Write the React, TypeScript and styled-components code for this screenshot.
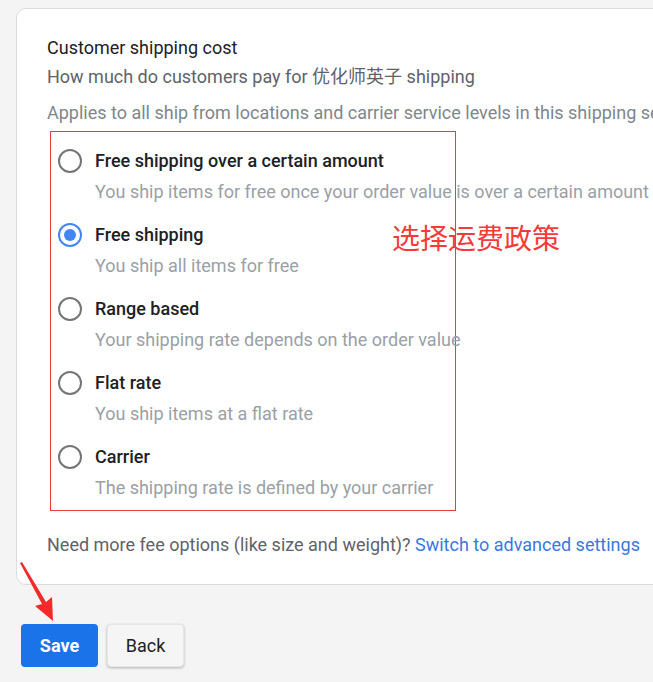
import React from "react";
import styled, { createGlobalStyle } from "styled-components";

const GlobalStyle = createGlobalStyle`
  html, body {
    margin: 0;
    padding: 0;
    background: #f4f4f4;
    overflow: hidden;
  }
  body {
    font-family: Roboto, "Noto Sans CJK SC", "Liberation Sans", sans-serif;
    -webkit-font-smoothing: antialiased;
  }
`;

const Page = styled.div`
  position: relative;
  width: 653px;
  height: 682px;
  overflow: hidden;
  background: #f4f4f4;
  padding-top: 8px;
  box-sizing: border-box;
`;

const Card = styled.section`
  margin-left: 16px;
  width: 720px;
  box-sizing: border-box;
  background: #ffffff;
  border: 1px solid #dadce0;
  border-radius: 10px;
  padding: 27px 0 27px 30px;
`;

const Title = styled.div`
  font-size: 18px;
  line-height: 24px;
  color: #202124;
  white-space: nowrap;
`;

const Subtitle = styled.div`
  font-size: 18px;
  line-height: 24px;
  color: #5f6368;
  margin-top: 5px;
  white-space: nowrap;
`;

const Hint = styled.div`
  font-size: 18px;
  line-height: 24px;
  color: #80868b;
  margin-top: 12px;
  white-space: nowrap;
`;

const OptionsBox = styled.div`
  position: relative;
  margin-top: 6px;
  margin-left: 3px;
  width: 406px;
  box-sizing: border-box;
  border: 1px solid #ec3b3b;
  padding: 17px 8px 10px 7px;
  display: flex;
  flex-direction: column;
  gap: 19px;
`;

const Option = styled.label`
  display: grid;
  grid-template-columns: 24px auto;
  column-gap: 13px;
  align-items: start;
  cursor: pointer;
`;

const Radio = styled.span<{ $checked?: boolean }>`
  width: 24px;
  height: 24px;
  box-sizing: border-box;
  border-radius: 50%;
  border: 2px solid ${(p) => (p.$checked ? "#4285f4" : "#757575")};
  display: flex;
  align-items: center;
  justify-content: center;
  &::after {
    content: "";
    width: 12px;
    height: 12px;
    border-radius: 50%;
    background: ${(p) => (p.$checked ? "#4285f4" : "transparent")};
  }
`;

const OptionText = styled.div`
  display: flex;
  flex-direction: column;
  gap: 7px;
  white-space: nowrap;
`;

const OptionLabel = styled.span`
  font-size: 18px;
  line-height: 24px;
  font-weight: 500;
  color: #202124;
`;

const OptionDesc = styled.span`
  font-size: 18px;
  line-height: 24px;
  color: #9aa0a6;
`;

const Annotation = styled.div`
  position: absolute;
  left: 341px;
  top: 91px;
  font-family: "Noto Sans CJK SC", sans-serif;
  font-size: 28px;
  line-height: 28px;
  color: #f53a3a;
  white-space: nowrap;
`;

const MoreLine = styled.div`
  margin-top: 22px;
  font-size: 18px;
  line-height: 24px;
  color: #5f6368;
  white-space: nowrap;
`;

const Link = styled.a`
  color: #3a78e0;
  text-decoration: none;
`;

const Actions = styled.div`
  display: flex;
  gap: 9px;
  margin-top: 39px;
  margin-left: 21px;
`;

const Button = styled.button<{ $primary?: boolean }>`
  width: 77px;
  height: 43px;
  border-radius: 4px;
  font-family: Roboto, "Liberation Sans", sans-serif;
  font-size: 18px;
  font-weight: ${(p) => (p.$primary ? 700 : 400)};
  color: ${(p) => (p.$primary ? "#ffffff" : "#202124")};
  background: ${(p) => (p.$primary ? "#1a73e8" : "#f5f5f5")};
  border: ${(p) => (p.$primary ? "none" : "1px solid #e6e6e6")};
  box-shadow: ${(p) => (p.$primary ? "none" : "0 1px 3px rgba(0,0,0,0.28)")};
  cursor: pointer;
  padding: 0;
`;

const ArrowSvg = styled.svg`
  position: absolute;
  left: 0;
  top: 0;
  pointer-events: none;
`;

const options = [
  { label: "Free shipping over a certain amount", desc: "You ship items for free once your order value is over a certain amount", checked: false },
  { label: "Free shipping", desc: "You ship all items for free", checked: true },
  { label: "Range based", desc: "Your shipping rate depends on the order value", checked: false },
  { label: "Flat rate", desc: "You ship items at a flat rate", checked: false },
  { label: "Carrier", desc: "The shipping rate is defined by your carrier", checked: false },
];

export default function App() {
  return (
    <Page>
      <GlobalStyle />
      <Card>
        <Title>Customer shipping cost</Title>
        <Subtitle>How much do customers pay for 优化师英子 shipping</Subtitle>
        <Hint>Applies to all ship from locations and carrier service levels in this shipping service</Hint>
        <OptionsBox>
          {options.map((o) => (
            <Option key={o.label}>
              <Radio $checked={o.checked} />
              <OptionText>
                <OptionLabel>{o.label}</OptionLabel>
                <OptionDesc>{o.desc}</OptionDesc>
              </OptionText>
            </Option>
          ))}
          <Annotation>选择运费政策</Annotation>
        </OptionsBox>
        <MoreLine>
          Need more fee options (like size and weight)? <Link href="#">Switch to advanced settings</Link>
        </MoreLine>
      </Card>
      <Actions>
        <Button $primary>Save</Button>
        <Button>Back</Button>
      </Actions>
      <ArrowSvg width="653" height="682" viewBox="0 0 653 682">
        <polygon points="20,563 22,562 46,602 52,597 53,621 35,606 42,604" fill="#f42a2a" />
      </ArrowSvg>
    </Page>
  );
}
